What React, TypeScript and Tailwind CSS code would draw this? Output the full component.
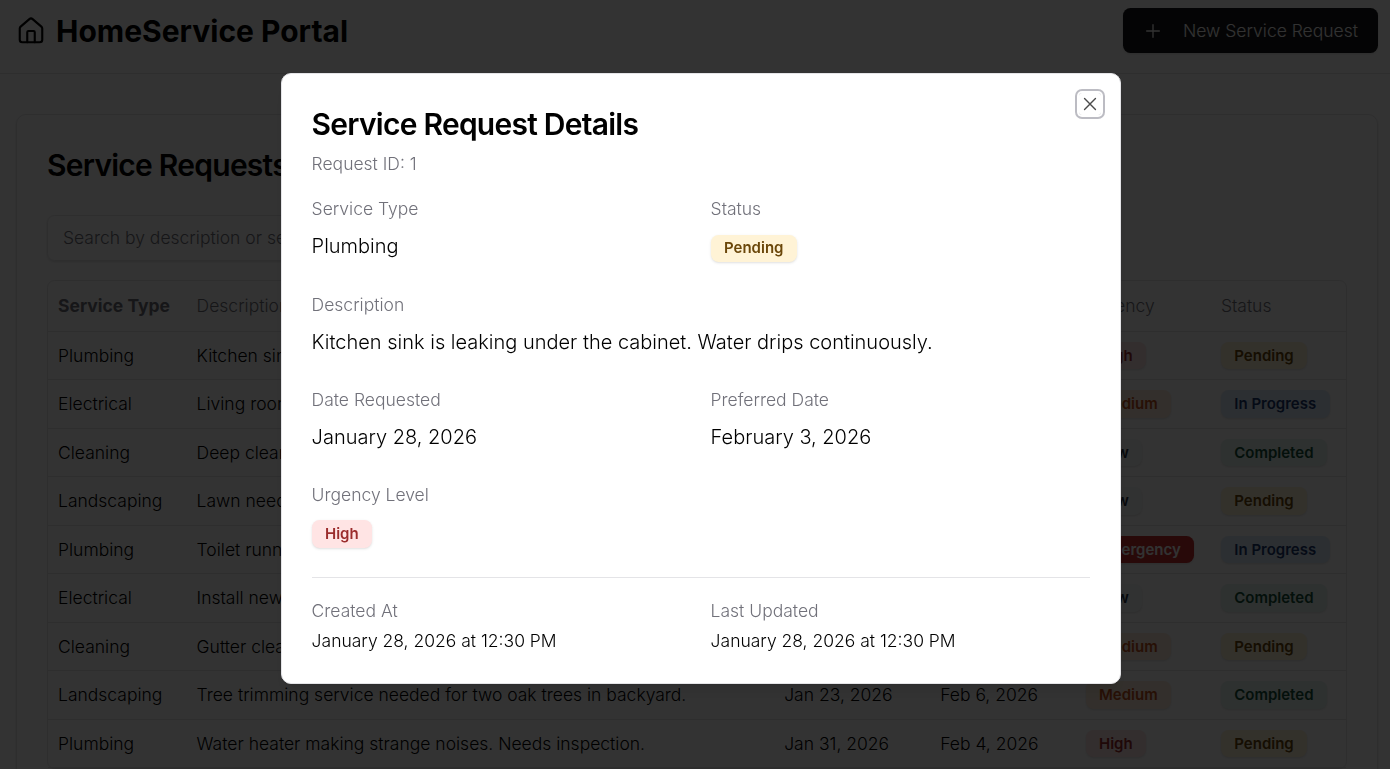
import React from "react";

const BADGES: Record<string, string> = {
  Pending: "bg-[#fff3d6] text-[#6b470a]",
  "In Progress": "bg-[#dcebfb] text-[#1c3a70]",
  Completed: "bg-[#e4f5f0] text-[#14533a]",
  High: "bg-[#ffe4e4] text-[#9b2c2c]",
  Medium: "bg-[#ffecd9] text-[#c2501c]",
  Low: "bg-[#f6f7f8] text-[#27303f]",
  Emergency: "bg-[#c53030] text-[#fafafa]",
};

const ROWS = [
  ["Plumbing", "Kitchen sink is leaking", "Jan 28, 2026", "Feb 3, 2026", "High", "Pending"],
  ["Electrical", "Living room outlet", "Jan 27, 2026", "Feb 1, 2026", "Medium", "In Progress"],
  ["Cleaning", "Deep cleaning needed", "Jan 20, 2026", "Jan 25, 2026", "Low", "Completed"],
  ["Landscaping", "Lawn needs mowing", "Jan 29, 2026", "Feb 5, 2026", "Low", "Pending"],
  ["Plumbing", "Toilet running", "Jan 30, 2026", "Jan 31, 2026", "Emergency", "In Progress"],
  ["Electrical", "Install new ceiling fan", "Jan 18, 2026", "Jan 24, 2026", "Low", "Completed"],
  ["Cleaning", "Gutter cleaning", "Jan 26, 2026", "Feb 2, 2026", "Medium", "Pending"],
  ["Landscaping", "Tree trimming service needed for two oak trees in backyard.", "Jan 23, 2026", "Feb 6, 2026", "Medium", "Completed"],
  ["Plumbing", "Water heater making strange noises. Needs inspection.", "Jan 31, 2026", "Feb 4, 2026", "High", "Pending"],
];

function Badge({ kind }: { kind: string }) {
  return (
    <span
      className={`inline-flex h-[27.5px] items-center rounded-[7.5px] px-[13.4px] text-[15px] leading-5 font-semibold shadow ${BADGES[kind]}`}
    >
      {kind}
    </span>
  );
}

function Field({ label, children }: { label: string; children: React.ReactNode }) {
  return (
    <div>
      <div className="text-[17.5px] leading-[25px] text-[#71717a]">{label}</div>
      {children}
    </div>
  );
}

function Value({ children }: { children: React.ReactNode }) {
  return <p className="mt-[10px] text-[20px] leading-[30px]">{children}</p>;
}

const COLS = "grid grid-cols-[138.6px_587.6px_156px_145.4px_135.3px_135px] items-center pl-[10px]";

export default function App() {
  return (
    <div className="h-[769px] w-[1390px] overflow-hidden bg-white font-['Inter',sans-serif] font-light text-black">
      <header className="flex h-[74px] items-start justify-between border-b border-[#e4e4e7] pt-2 pr-3 pl-4">
        <div className="flex h-[45px] items-center gap-[10px]">
          <svg className="size-[30px]" viewBox="0 0 24 24" fill="none" stroke="currentColor" strokeWidth="1.7" strokeLinecap="round" strokeLinejoin="round">
            <path d="M3 10a2 2 0 0 1 .7-1.5l7-6a2 2 0 0 1 2.6 0l7 6A2 2 0 0 1 21 10v9a2 2 0 0 1-2 2H5a2 2 0 0 1-2-2z" />
            <path d="M15 21v-8a1 1 0 0 0-1-1h-4a1 1 0 0 0-1 1v8" />
          </svg>
          <h1 className="text-[30px] leading-10 font-bold">HomeService Portal</h1>
        </div>
        <button className="flex h-[45px] w-[255px] items-center rounded-[7.5px] bg-[#18181b] pt-px pl-5 text-[17.5px] text-[#fafafa] shadow">
          <svg className="mr-5 size-5" viewBox="0 0 15 15" fill="none" stroke="currentColor" strokeWidth="1" strokeLinecap="round">
            <path d="M7.5 2.75v9.5M2.75 7.5h9.5" />
          </svg>
          New Service Request
        </button>
      </header>

      <main className="pt-10 pr-3 pl-4">
        <section className="h-[900px] rounded-[10px] border border-[#e4e4e7] px-[30px] pt-[30px] shadow">
          <h2 className="text-[30px] leading-10 font-semibold tracking-tight">Service Requests</h2>
          <div className="mt-[29.5px] flex h-[46px] w-[480px] items-center rounded-[7.5px] border border-[#e4e4e7] px-[15px] pt-px text-[17.5px] text-[#71717a] shadow-sm">
            Search by description or service type...
          </div>
          <div className="mt-[19.5px] rounded-[7.5px] border border-[#e4e4e7] text-[17.5px]">
            <div className={`${COLS} h-[49.6px] text-[#71717a]`}>
              <b className="font-bold">Service Type</b>
              <span>Description</span>
              <span>Requested</span>
              <span>Preferred</span>
              <span>Urgency</span>
              <span>Status</span>
            </div>
            {ROWS.map((r, i) => (
              <div key={i} className={`${COLS} h-[48.5px] border-t border-[#e4e4e7] pt-[0.8px]`}>
                <span>{r[0]}</span>
                <span>{r[1]}</span>
                <span>{r[2]}</span>
                <span>{r[3]}</span>
                <span className="flex"><Badge kind={r[4]} /></span>
                <span className="flex"><Badge kind={r[5]} /></span>
              </div>
            ))}
            <div className="border-t border-[#e4e4e7]" />
          </div>
        </section>
      </main>

      <div className="fixed inset-0 bg-black/80 pt-[72.6px] pl-[280.6px]">
        <div role="dialog" className="relative h-[611px] w-[840px] rounded-[10px] border border-[#e4e4e7] bg-white p-[30px] shadow-lg">
          <h2 className="text-[30px] leading-10 font-semibold tracking-tight">Service Request Details</h2>
          <p className="mt-[7.5px] text-[17.5px] leading-[25px] text-[#71717a]">Request ID: 1</p>

          <div className="mt-5 grid h-[66px] grid-cols-2 gap-5">
            <Field label="Service Type"><Value>Plumbing</Value></Field>
            <Field label="Status"><div className="mt-[13.5px] flex"><Badge kind="Pending" /></div></Field>
          </div>
          <div className="mt-[30px]">
            <Field label="Description"><Value>Kitchen sink is leaking under the cabinet. Water drips continuously.</Value></Field>
          </div>
          <div className="mt-[30px] grid grid-cols-2 gap-5">
            <Field label="Date Requested"><Value>January 28, 2026</Value></Field>
            <Field label="Preferred Date"><Value>February 3, 2026</Value></Field>
          </div>
          <div className="mt-[30px] h-[64.5px]">
            <Field label="Urgency Level"><div className="mt-[13px] flex"><Badge kind="High" /></div></Field>
          </div>
          <div className="mt-[30px] grid grid-cols-2 gap-5 border-t border-[#e4e4e7] pt-5">
            <Field label="Created At"><p className="mt-[5px] text-[17.5px] leading-[25px]">January 28, 2026 at 12:30 PM</p></Field>
            <Field label="Last Updated"><p className="mt-[5px] text-[17.5px] leading-[25px]">January 28, 2026 at 12:30 PM</p></Field>
          </div>

          <button aria-label="Close" className="absolute top-[19.4px] right-[18.6px] flex size-[22px] items-center justify-center rounded-[3px] opacity-70 ring-2 ring-[#a1a1aa] ring-offset-2">
            <svg className="size-5 shrink-0" viewBox="0 0 15 15" fill="none" stroke="currentColor" strokeWidth="1.05" strokeLinecap="round">
              <path d="M3.4 3.4l8.2 8.2M11.6 3.4l-8.2 8.2" />
            </svg>
          </button>
        </div>
      </div>
    </div>
  );
}
